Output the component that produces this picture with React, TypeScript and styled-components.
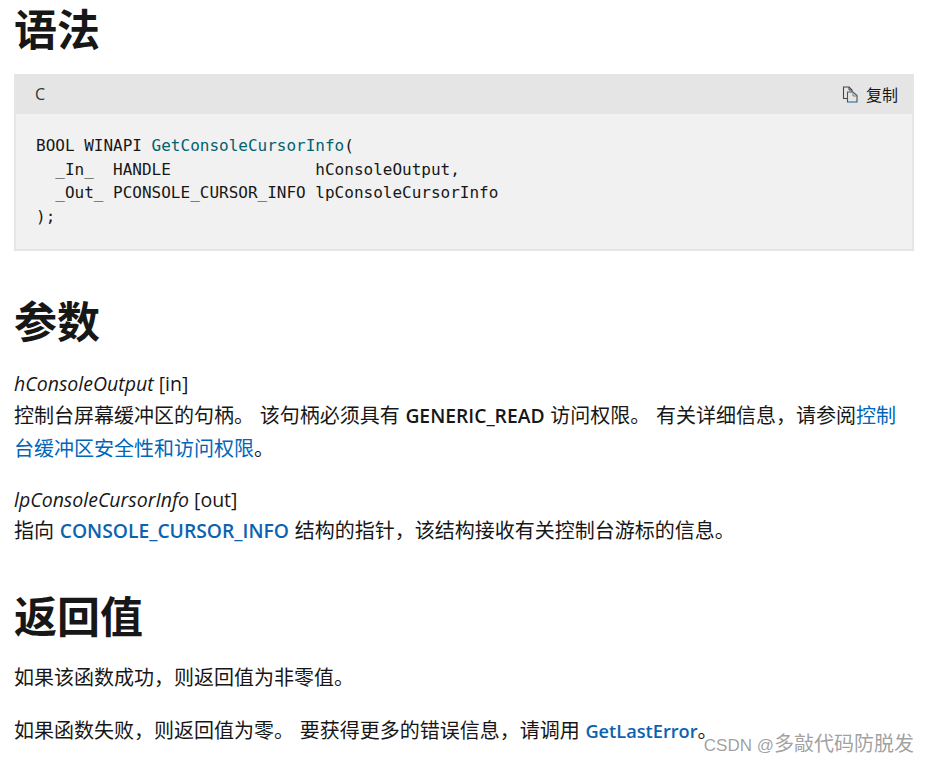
import React from 'react';
import styled, { createGlobalStyle } from 'styled-components';

const GlobalStyle = createGlobalStyle`
  html, body {
    margin: 0;
    padding: 0;
    background: #fff;
  }
  body {
    font-family: 'Open Sans', 'Noto Sans CJK SC', sans-serif;
    color: #171717;
  }
`;

const Page = styled.div`
  position: relative;
  width: 929px;
  height: 762px;
  overflow: hidden;
  box-sizing: border-box;
  padding: 0 15px 0 14px;
`;

const Heading = styled.h2<{ $top: number }>`
  margin: ${p => p.$top}px 0 0;
  font-family: 'Noto Sans CJK SC', sans-serif;
  font-size: 43px;
  line-height: 54px;
  font-weight: 700;
  color: #171717;
`;

const CodeBlock = styled.div`
  margin-top: 20px;
  background: #f1f1f1;
  border: 2px solid #e5e5e5;
  border-top: none;
`;

const CodeHeader = styled.div`
  display: flex;
  align-items: center;
  justify-content: space-between;
  height: 40px;
  margin: 0 -2px;
  padding: 0 16px 0 21px;
  background: #e5e5e5;
  font-size: 16px;
  color: #333;
`;

const CopyButton = styled.span`
  display: flex;
  align-items: center;
  gap: 8px;
  font-family: 'Noto Sans CJK SC', sans-serif;
  font-size: 16px;
  color: #171717;
`;

const Code = styled.pre`
  margin: 0;
  padding: 20px 20px 21px;
  font-family: 'DejaVu Sans Mono', 'Liberation Mono', monospace;
  font-size: 16px;
  line-height: 23.5px;
  color: #171717;
`;

const FnName = styled.span`
  color: #00626f;
`;

const Term = styled.div<{ $top: number }>`
  margin-top: ${p => p.$top}px;
  font-size: 19.5px;
  line-height: 28px;
`;

const Para = styled.p<{ $top: number }>`
  margin: ${p => p.$top}px 0 0;
  font-size: 19.3px;
  line-height: 32px;
  word-spacing: 1.2px;
`;

const Cjk = styled.span`
  font-family: 'Noto Sans CJK SC', sans-serif;
  font-size: 20px;
`;

const Strong = styled.b`
  font-weight: 600;
  color: #171717;
`;

const TextLink = styled.a`
  color: #0067b8;
  text-decoration: none;
  font-family: 'Noto Sans CJK SC', sans-serif;
  font-size: 20px;
`;

const CodeLink = styled.a<{ $size: number }>`
  color: #0b63b0;
  font-size: ${p => p.$size}px;
  font-weight: 600;
  text-decoration: none;
`;

const Watermark = styled.div`
  position: absolute;
  right: 15px;
  top: 730px;
  font-family: 'Noto Sans CJK SC', sans-serif;
  font-size: 20px;
  line-height: 26px;
  color: rgba(130, 130, 130, 0.75);
`;

const WatermarkLatin = styled.span`
  font-family: 'Liberation Sans', sans-serif;
  font-size: 17px;
`;

const CopyIcon = () => (
  <svg width="16" height="17" viewBox="0 0 16 17" fill="none">
    <path d="M5.5 12.5H1.5V1H7L10 4V6" stroke="#444" strokeWidth="1.1" />
    <path d="M7 1V4H10" stroke="#444" strokeWidth="1" />
    <path d="M5.5 6H11L15 9.5V16H5.5Z" stroke="#1f5f94" strokeWidth="1.1" />
    <path d="M11 6V10H15" stroke="#a8712f" strokeWidth="1" />
  </svg>
);

const App: React.FC = () => (
  <Page>
    <GlobalStyle />
    <Heading $top={0}>语法</Heading>
    <CodeBlock>
      <CodeHeader>
        <span>C</span>
        <CopyButton>
          <CopyIcon />
          复制
        </CopyButton>
      </CodeHeader>
      <Code>
        BOOL WINAPI <FnName>GetConsoleCursorInfo</FnName>({'\n'}
        {'  _In_  HANDLE               hConsoleOutput,\n'}
        {'  _Out_ PCONSOLE_CURSOR_INFO lpConsoleCursorInfo\n'}
        {');'}
      </Code>
    </CodeBlock>

    <Heading $top={41}>参数</Heading>
    <Term $top={24}>
      <i>hConsoleOutput</i> [in]
    </Term>
    <Para $top={1}>
      <Cjk>控制台屏幕缓冲区的句柄。 该句柄必须具有 </Cjk>
      <Strong>GENERIC_READ</Strong>
      <Cjk> 访问权限。 有关详细信息，请参阅</Cjk>
      <TextLink>控制台缓冲区安全性和访问权限</TextLink>
      <Cjk>。</Cjk>
    </Para>
    <Term $top={21}>
      <i>lpConsoleCursorInfo</i> [out]
    </Term>
    <Para $top={0}>
      <Cjk>指向 </Cjk>
      <CodeLink $size={19.3}>CONSOLE_CURSOR_INFO</CodeLink>
      <Cjk> 结构的指针，该结构接收有关控制台游标的信息。</Cjk>
    </Para>

    <Heading $top={40}>返回值</Heading>
    <Para $top={20}>
      <Cjk>如果该函数成功，则返回值为非零值。</Cjk>
    </Para>
    <Para $top={20}>
      <Cjk>如果函数失败，则返回值为零。 要获得更多的错误信息，请调用 </Cjk>
      <CodeLink $size={18.2}>GetLastError</CodeLink>
      <Cjk>。</Cjk>
    </Para>
    <Watermark>
      <WatermarkLatin>CSDN @</WatermarkLatin>多敲代码防脱发
    </Watermark>
  </Page>
);

export default App;
